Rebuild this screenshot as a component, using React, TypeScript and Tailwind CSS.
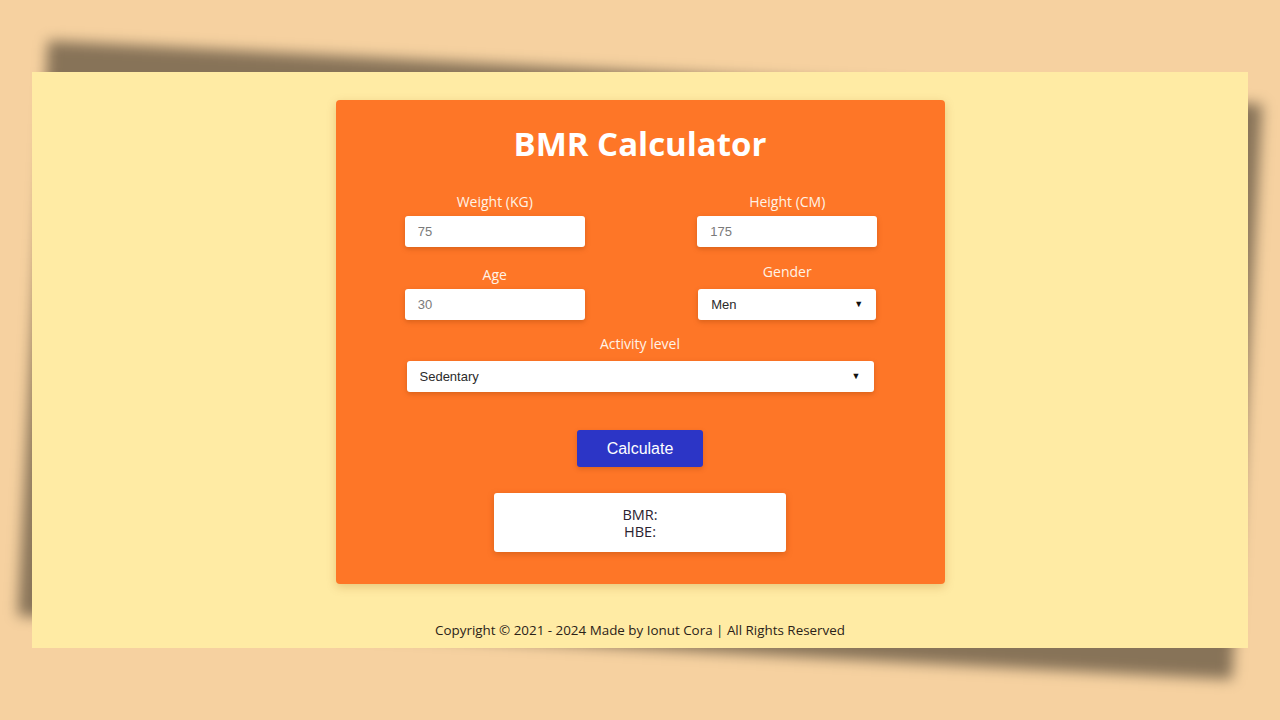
import { useState } from "react";

const sans = "font-['Open_Sans','Liberation_Sans',sans-serif]";
const arial = "font-['Liberation_Sans',Arial,sans-serif]";

const Field = ({ label, placeholder }: { label: string; placeholder: string }) => (
    <div className="flex flex-col items-center">
        <label className={`${sans} mb-[6px] h-4 text-[14px] leading-4 text-[#fff3e6]`}>{label}</label>
        <input
            type="number"
            placeholder={placeholder}
            className={`${arial} h-[31px] w-[180px] rounded-[3px] bg-white px-[13px] text-[13px] text-[#333] shadow-[0_2px_5px_rgba(150,60,0,0.35)] outline-none placeholder:text-[#7a7a7a]`}
        />
    </div>
);

const Select = ({ value, options, width }: { value: string; options: string[]; width: string }) => {
    const [v, setV] = useState(value);
    return (
        <div className={`relative ${width}`}>
            <select
                value={v}
                onChange={(e) => setV(e.target.value)}
                className={`${arial} h-[31px] w-full appearance-none rounded-[3px] bg-white px-[13px] text-[13px] text-[#2b2b2b] shadow-[0_2px_5px_rgba(150,60,0,0.35)] outline-none`}
            >
                {options.map((o) => (
                    <option key={o}>{o}</option>
                ))}
            </select>
            <span className="pointer-events-none absolute right-[13px] top-[9px] text-[9px] leading-3 text-[#111]">▼</span>
        </div>
    );
};

export default function App() {
    return (
        <div className="relative h-[720px] w-[1280px] overflow-hidden bg-[#f6d1a0] pl-[32px] pt-[72px]">
            <div className="relative h-[576px] w-[1216px]">
                {/* tilted drop shadow behind the page */}
                <div className="absolute inset-0 rotate-[3deg] bg-black/45 blur-[7px]" />

                <div className="relative flex h-full w-full flex-col items-center bg-[#ffeba4] pt-[28px]">
                    <div className="flex h-[484px] w-[609px] flex-col items-center rounded-[4px] bg-[#fe7627] px-[14px] shadow-[0_3px_10px_rgba(160,90,0,0.25)]">
                        <h1 className={`${sans} mt-[20px] text-[33px] font-bold leading-[48px] text-white`}>BMR Calculator</h1>

                        <div className="mt-[26px] grid w-full grid-cols-2 gap-y-[20px]">
                            <Field label="Weight (KG)" placeholder="75" />
                            <div className="pl-[4px]">
                                <Field label="Height (CM)" placeholder="175" />
                            </div>
                            <Field label="Age" placeholder="30" />
                            <div className="-mt-[3px] flex flex-col items-center pl-[4px]">
                                <label className={`${sans} mb-[9px] h-4 text-[14px] leading-4 text-[#fff3e6]`}>Gender</label>
                                <Select value="Men" options={["Men", "Women"]} width="w-[178px]" />
                            </div>
                        </div>

                        <div className="mt-[16px] flex flex-col items-center">
                            <label className={`${sans} mb-[9px] h-4 text-[14px] leading-4 text-[#fff3e6]`}>Activity level</label>
                            <Select
                                value="Sedentary"
                                options={["Sedentary", "Lightly active", "Moderately active", "Very active", "Extra active"]}
                                width="w-[467px]"
                            />
                        </div>

                        <button
                            className={`${arial} mt-[38px] h-[37px] w-[126px] rounded-[3px] bg-[#2c35c6] text-[16px] text-white shadow-[0_2px_5px_rgba(150,60,0,0.3)]`}
                        >
                            Calculate
                        </button>

                        <div
                            className={`${sans} mt-[26px] flex h-[59px] w-[292px] flex-col items-center justify-center rounded-[3px] bg-white text-[14.5px] leading-[17px] text-[#2a2230] shadow-[0_2px_6px_rgba(150,60,0,0.35)]`}
                        >
                            <p>BMR:</p>
                            <p>HBE:</p>
                        </div>
                    </div>

                    <p className={`${sans} mt-[38px] text-[13.4px] leading-4 text-[#2b2218]`}>
                        Copyright © 2021 - 2024 Made by Ionut Cora | All Rights Reserved
                    </p>
                </div>
            </div>
        </div>
    );
}
